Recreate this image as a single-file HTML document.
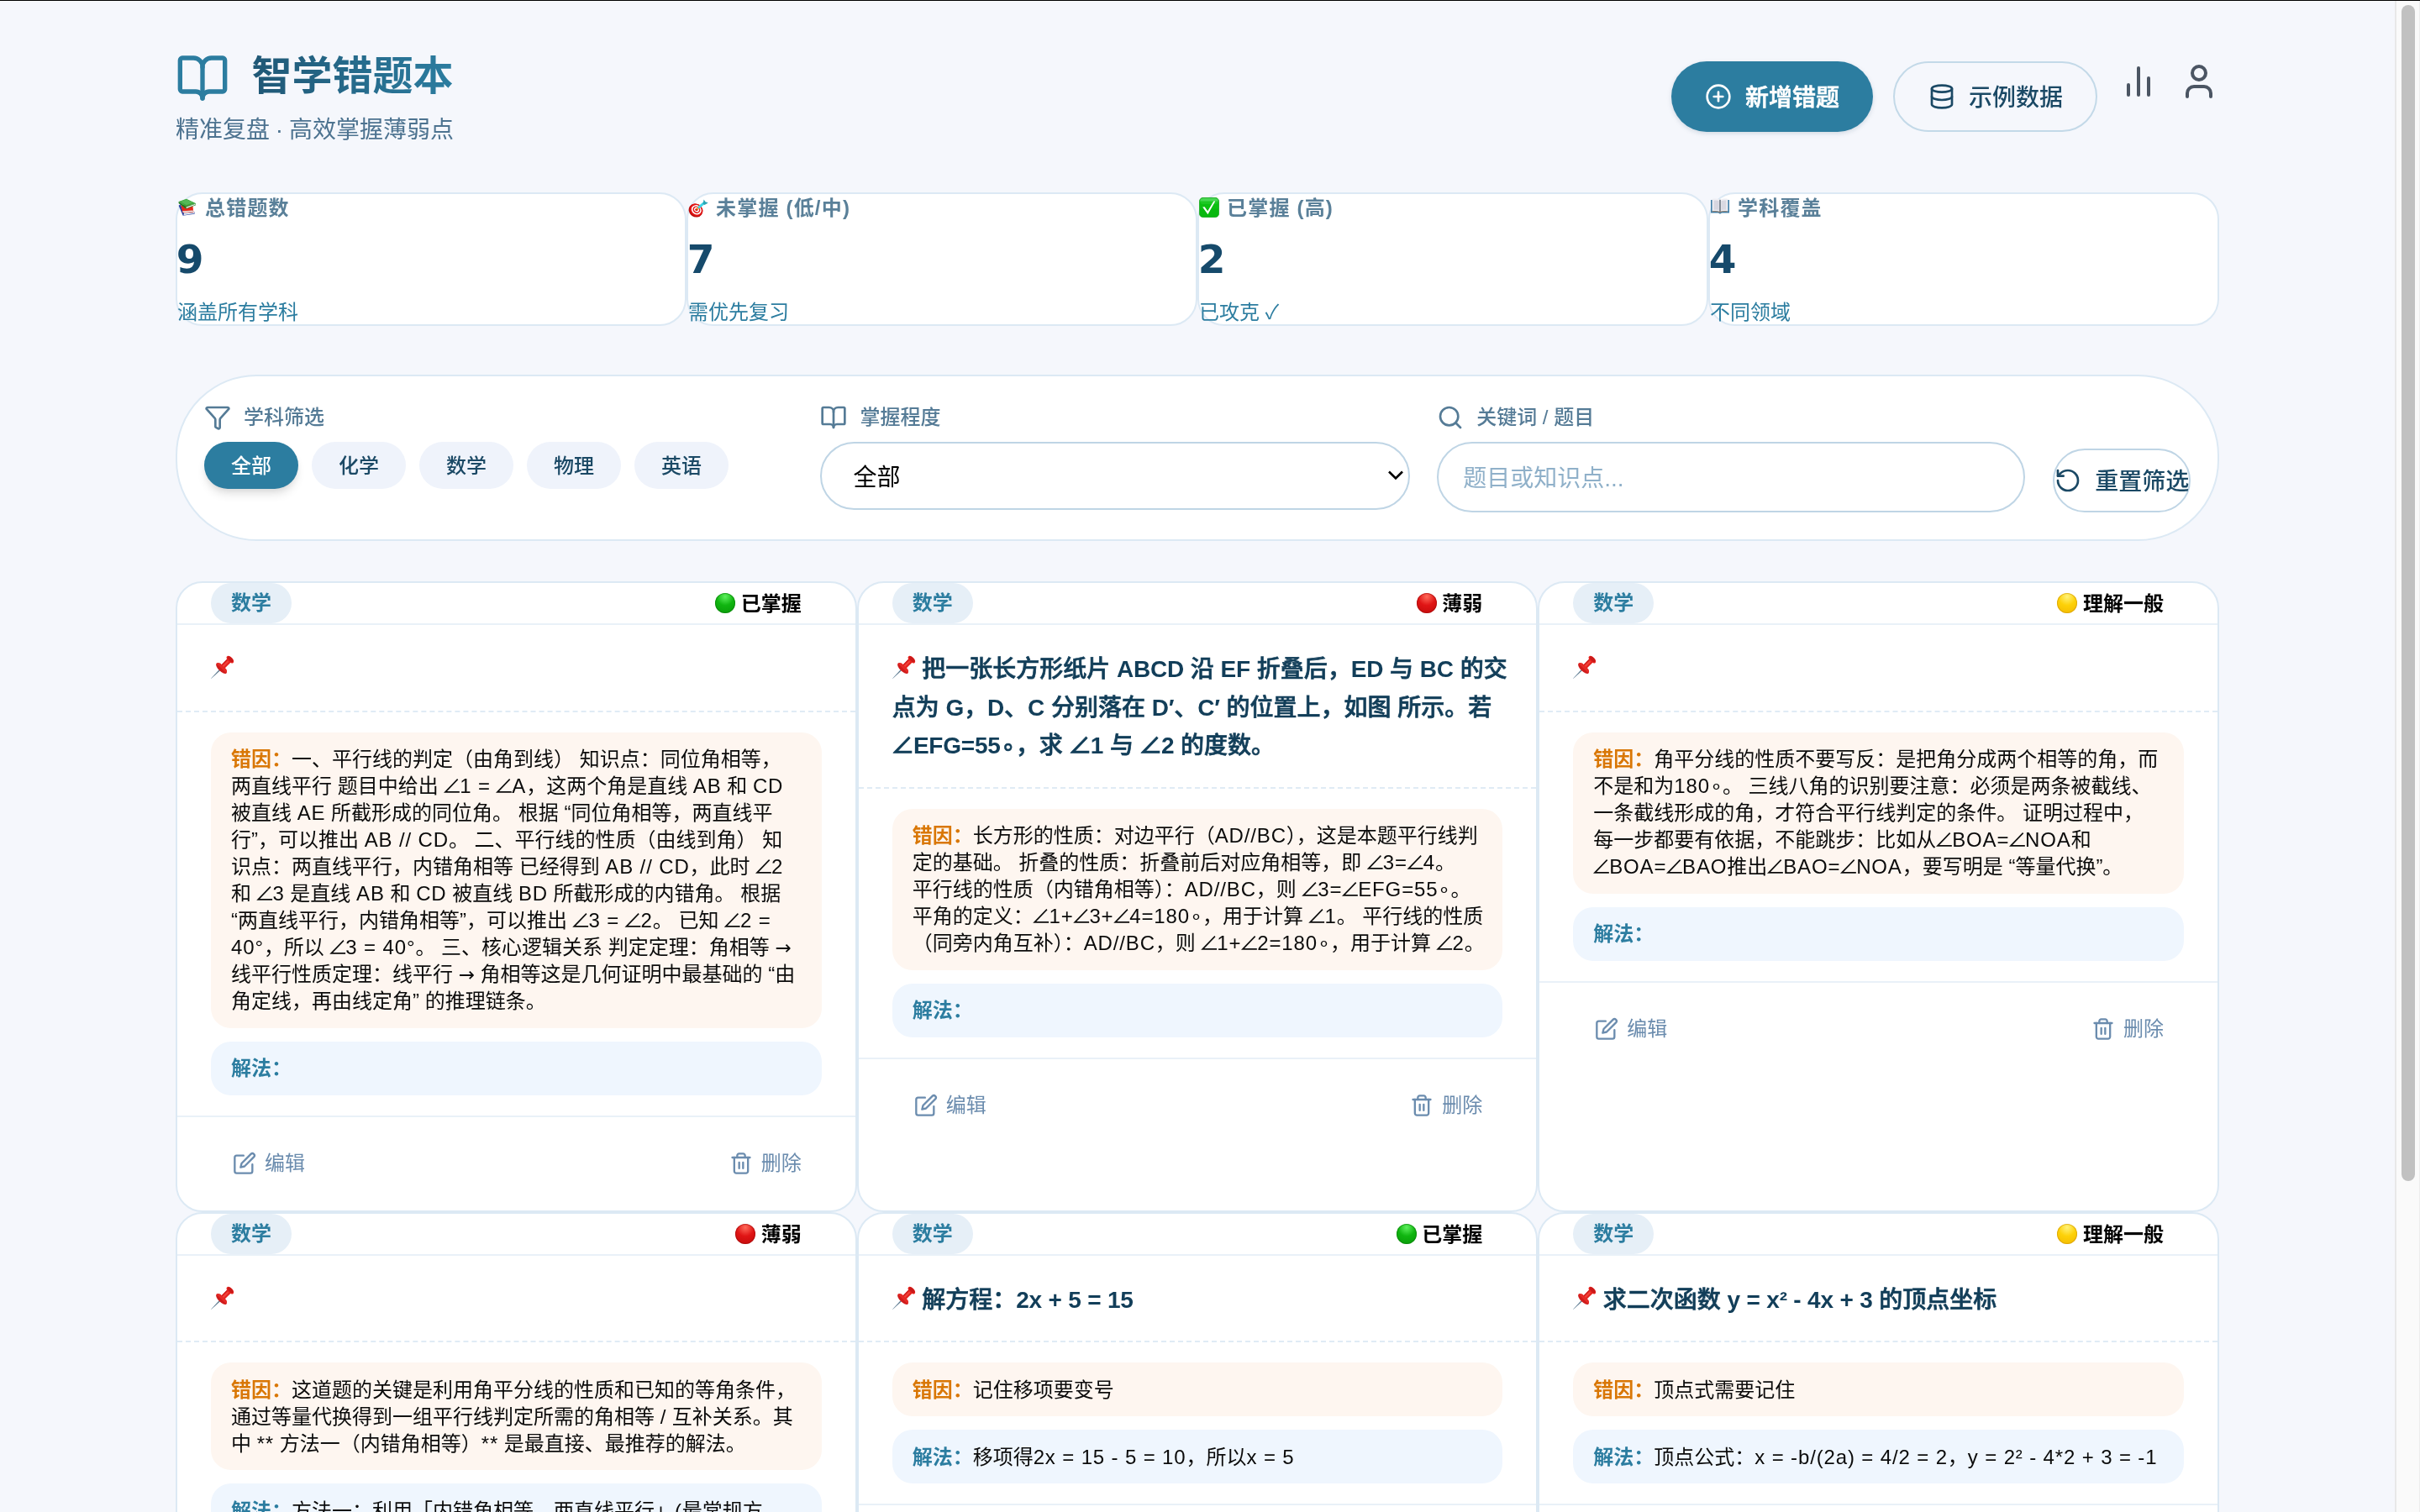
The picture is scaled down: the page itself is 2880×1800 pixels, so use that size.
<!DOCTYPE html>
<html lang="zh-CN">
<head>
<meta charset="utf-8">
<title>智学错题本</title>
<style>
*{box-sizing:border-box}
html,body{margin:0;padding:0}
html{background:#f5f7fc}
body{width:2880px;height:1800px;overflow:hidden;position:relative;font-family:"Liberation Sans","Noto Sans CJK SC",sans-serif;color:#111;-webkit-font-smoothing:antialiased}
#z{will-change:transform;zoom:2;position:absolute;left:0;top:0;width:1440px;height:900px;overflow:hidden;background:#f5f7fc}
@media (max-width:2000px){body{width:1440px;height:900px}#z{zoom:1}}
.topline{position:absolute;left:0;top:0;width:1440px;height:.5px;background:#000;z-index:9}
.sb{position:absolute;left:1425px;top:.5px;width:15px;height:899.5px;background:#fafafa;border-left:1px solid #e8e8e8;border-right:.5px solid #ededed}
.sb i{position:absolute;left:3px;top:2.5px;width:8px;height:700px;border-radius:4px;background:#c1c1c1}
.wrap{position:absolute;left:104.5px;top:0;width:1216px;height:900px}
svg{display:block}
.ic{fill:none;stroke:currentColor;stroke-width:2;stroke-linecap:round;stroke-linejoin:round}

/* header */
.logo{position:absolute;left:-.25px;top:30.3px;width:32px;height:32px;color:#2c7da0}
.ttl{position:absolute;left:-1.25px;top:29.5px;margin:0;padding-left:46.5px;width:166.5px;font-size:24px;line-height:32px;font-weight:700;white-space:nowrap;background:linear-gradient(90deg,#1b4965,#2c7da0);-webkit-background-clip:text;background-clip:text;color:transparent}
.sub{position:absolute;left:0;top:67.35px;word-spacing:-.5px;margin:0;font-size:14px;line-height:20px;color:#4d7390;white-space:nowrap}
.btn{position:absolute;top:36.45px;height:42px;border-radius:21px;display:flex;align-items:center;font-size:14px;line-height:20px;white-space:nowrap}
.btn span{position:relative;top:1px}
.btn svg{width:16px;height:16px;margin-right:8px;flex:none}
.b1{left:890px;width:120.2px;padding-left:20px;background:#2c7da0;color:#fff;font-weight:500;-webkit-text-stroke:.3px #fff;box-shadow:0 1px 3px rgba(27,73,101,.1),0 1px 2px rgba(27,73,101,.06)}
.b2{left:1022px;width:121.7px;padding-left:20px;border:1px solid #c3d9e8;color:#1b4965;font-weight:500}
.hi{position:absolute;top:36.45px;width:24px;height:24px;color:#4b5563}

/* stats */
.stat{position:absolute;top:114.5px;width:304px;height:79.5px;border:1px solid #dce9f4;border-radius:16px;background:#fff}
.stat .l{position:absolute;left:0;top:.25px;font-size:12px;line-height:16px;font-weight:700;letter-spacing:.6px;color:#5a8099;white-space:nowrap;display:flex;align-items:center}
.stat .l .e{width:12px;height:12px;margin-right:4.5px;flex:none;position:relative;top:-.5px}
.stat .n{position:absolute;left:-.6px;top:22.9px;font-family:"DejaVu Sans","Liberation Sans",sans-serif;font-size:23.5px;line-height:32px;font-weight:700;color:#164a6b;white-space:nowrap}
.stat .s{position:absolute;left:0;top:62.5px;font-size:12px;line-height:16px;color:#2c7da0;white-space:nowrap}

/* filter */
.flt{position:absolute;left:0;top:222.9px;width:1216px;height:99.1px;border:1px solid #dce9f4;border-radius:48px;background:#fff}
.fl{position:absolute;top:16.4px;height:16px;display:flex;align-items:center;font-size:12px;line-height:16px;font-weight:500;color:#557b96;white-space:nowrap}
.fl svg{width:16px;height:16px;margin-right:7.5px;flex:none;position:relative;top:.4px}
.chips{position:absolute;left:16px;top:39.1px;display:flex}
.chip{height:28px;width:56px;margin-right:8px;border-radius:14px;background:#eff3fb;color:#1b4965;font-size:12px;line-height:29.2px;text-align:center;font-weight:500;overflow:hidden;white-space:nowrap}
.chip.on{background:#2c7da0;color:#fff;box-shadow:0 4px 6px -1px rgba(0,0,0,.11),0 2px 4px -2px rgba(0,0,0,.1)}
.sel{position:absolute;left:382.7px;top:39.1px;width:350.7px;height:40.4px;border:1px solid #bfd5e5;border-radius:21px;font-size:14px;line-height:41.2px;padding-left:18.5px;overflow:hidden;color:#000;white-space:nowrap}
.sel svg{position:absolute;right:2.6px;top:15.6px;width:10px;height:6.5px}
.inp{position:absolute;left:749.6px;top:39.1px;width:350px;height:42px;border:1px solid #bfd5e5;border-radius:21px;font-size:14px;line-height:42.4px;padding-left:14.5px;overflow:hidden;color:#8fb0c9;white-space:nowrap}
.rst{position:absolute;left:1116.1px;top:43.1px;width:81.8px;height:38px;border:1px solid #bfd5e5;border-radius:19px;display:flex;align-items:center;font-size:14px;line-height:20px;font-weight:500;color:#1b4965;white-space:nowrap}
.rst span{position:relative;top:1px}
.rst svg{width:16px;height:16px;margin-right:8px;flex:none}

/* cards */
.card{position:absolute;width:405.333px;border:1px solid #dce9f4;border-radius:16px;background:#fff;overflow:hidden}
.ch{height:25px;padding:0 20px;display:flex;justify-content:space-between;align-items:flex-start;border-bottom:1px solid #e9f1f8}
.subj{height:24px;line-height:24px;padding:0 12px;border-radius:12px;background:#e6eff7;color:#2c7da0;font-size:12px;font-weight:700;white-space:nowrap}
.st{height:24px;padding:1px 12px 0;font-size:12px;line-height:23px;overflow:hidden;font-weight:700;color:#000;display:flex;align-items:center;white-space:nowrap}
.st i{display:block;width:12px;height:12px;border-radius:50%;margin-right:3.6px;flex:none;position:relative;top:-.5px;left:.3px}
.g{background:radial-gradient(circle at 50% 18%,#5df05d 0,#10b510 45%,#089808 100%);box-shadow:inset 0 0 0 .5px rgba(10,120,10,.55)}
.r{background:radial-gradient(circle at 50% 18%,#ff6a5a 0,#e01515 45%,#c00a0a 100%);box-shadow:inset 0 0 0 .5px rgba(150,10,10,.5)}
.y{background:radial-gradient(circle at 50% 18%,#fff27a 0,#fdd108 45%,#f2b800 100%);box-shadow:inset 0 0 0 .5px rgba(200,140,0,.5)}
.ct{padding:15px 20px 13px;border-bottom:1px dashed #e0ebf5;font-size:14px;line-height:22.75px;font-weight:500;-webkit-text-stroke:.34px #123e59;color:#123e59;white-space:nowrap;min-height:51.75px}
.pin{display:inline-block;width:14px;height:14px;vertical-align:-.6px;margin-right:3.75px;position:relative;top:.25px}
.cb{padding:12px 20px}
.box{border-radius:12px;padding:8.4px 12px 7.6px;font-size:12px;line-height:16px;color:#0b0b0b;white-space:nowrap}
.err{background:#fef6f0}
.sol{background:#eff6fe;margin-top:8px}
.ar{font-family:"DejaVu Sans",sans-serif;font-size:11.5px;line-height:1}
.box .la{letter-spacing:.43px}
.box .an{font-style:normal;margin:0 -1.3px}
.ct .la{letter-spacing:-.1px;font-weight:700;-webkit-text-stroke:0}
.ct .an{font-style:normal;margin:0 -.7px}
.err b{color:#d97706;font-weight:700}
.sol b{color:#2c7da0;font-weight:700}
.cf{border-top:1px solid #e9f1f8;height:56.7px;display:flex;justify-content:space-between;align-items:center;padding:0 20px;color:#6b8cae;font-size:12px;line-height:16px}
.fb{display:flex;align-items:center;padding:0 12px 0 13px;white-space:nowrap}
.fb svg{width:14px;height:14px;margin-right:5px;flex:none}
</style>
</head>
<body>
<div id="z">
<div class="topline"></div>
<div class="wrap">
<div class="logo"><svg class="ic" viewBox="0 0 24 24" ><path d="M12 7v14"/><path d="M3 18a1 1 0 0 1-1-1V4a1 1 0 0 1 1-1h5a4 4 0 0 1 4 4 4 4 0 0 1 4-4h5a1 1 0 0 1 1 1v13a1 1 0 0 1-1 1h-6a3 3 0 0 0-3 3 3 3 0 0 0-3-3z"/></svg></div>
<h1 class="ttl">智学错题本</h1>
<p class="sub">精准复盘 · 高效掌握薄弱点</p>
<div class="btn b1"><svg class="ic" viewBox="0 0 24 24" ><circle cx="12" cy="12" r="10"/><path d="M8 12h8"/><path d="M12 8v8"/></svg><span>新增错题</span></div>
<div class="btn b2"><svg class="ic" viewBox="0 0 24 24" ><ellipse cx="12" cy="5" rx="9" ry="3"/><path d="M3 5v14a9 3 0 0 0 18 0V5"/><path d="M3 12a9 3 0 0 0 18 0"/></svg><span>示例数据</span></div>
<div class="hi" style="left:1156px"><svg class="ic" viewBox="0 0 24 24" ><path d="M18 20V10"/><path d="M12 20V4"/><path d="M6 20v-6"/></svg></div>
<div class="hi" style="left:1192px"><svg class="ic" viewBox="0 0 24 24" ><path d="M19 21v-2a4 4 0 0 0-4-4H9a4 4 0 0 0-4 4v2"/><circle cx="12" cy="7" r="4"/></svg></div>
<div class="stat" style="left:0px"><div class="l"><svg class="e" viewBox="-.74 -1 26 26"><path d="M1 9.5 3.5 8 8 20.5 6.5 22.5z" fill="#2a3f9e"/><path d="M6.5 22.5 8 20.5 22 18 21.5 20.5z" fill="#3047b0"/><path d="M8 20.6 21.6 18.2 21.4 19.6 7.6 21.9z" fill="#f1efe6"/><path d="M4 9 19 8.5 20 17 6 18z" fill="#e8261b"/><path d="M5.8 16.2 19.8 15.4 20.2 18 6.3 18.9z" fill="#c71e16"/><path d="M6 16.6 19.6 15.9 19.8 17.4 6.2 18.1z" fill="#eef3ee"/><path d="M1 4.5 11 1 23 6.5 10.5 11z" fill="#3aa53a"/><path d="M1 4.5 10.5 11 10.5 13.8 1 6.6z" fill="#1e7a1e"/><path d="M10.5 11 23 6.5 23 9 10.5 13.8z" fill="#2a8c2a"/><path d="M10.9 11.5 22.6 7.4 22.6 8.6 10.9 13z" fill="#f4f2f6"/><path d="M3 4.4 11 1.6 20 5.8 11 8.8z" fill="#63c063" opacity=".7"/></svg>总错题数</div><div class="n">9</div><div class="s">涵盖所有学科</div></div><div class="stat" style="left:304px"><div class="l"><svg class="e" viewBox="0 0 24 24"><ellipse cx="9" cy="15.5" rx="8.6" ry="7.8" transform="rotate(35 9 15.5)" fill="#b80d0d"/><ellipse cx="9.6" cy="14.9" rx="8" ry="7.1" transform="rotate(35 9.6 14.9)" fill="#e31414"/><ellipse cx="9.8" cy="14.8" rx="6.2" ry="5.4" transform="rotate(35 9.8 14.8)" fill="#fff"/><ellipse cx="9.9" cy="14.7" rx="4.6" ry="4" transform="rotate(35 9.9 14.7)" fill="#e31414"/><ellipse cx="10" cy="14.6" rx="3.1" ry="2.7" transform="rotate(35 10 14.6)" fill="#fff"/><ellipse cx="10" cy="14.5" rx="1.7" ry="1.5" fill="#d40c0c"/><path d="M10.5 14 13 11" stroke="#e8a21a" stroke-width="1.6" stroke-linecap="round"/><path d="M13 11.6 18.2 7.2" stroke="#3fd6e6" stroke-width="3" stroke-linecap="round"/><path d="M17.5 7.8 18.6 2.6 20.5 5.2 23.8 6.4 19.4 8.9z" fill="#2aa7b5"/></svg>未掌握 (低/中)</div><div class="n">7</div><div class="s">需优先复习</div></div><div class="stat" style="left:608px"><div class="l"><svg class="e" viewBox="0 0 24 24"><rect x=".3" y=".3" width="23.4" height="23.4" rx="4.6" fill="#08b80f" stroke="#0a9a10" stroke-width=".6"/><rect x="1.2" y="1" width="21.600" height="7" rx="3.800" fill="#7cf088" opacity=".55"/><rect x=".9" y="4.500" width="22.200" height="9" fill="#0cc313" opacity=".75"/><path d="M4.2 11.6 6.6 11.2 10.2 16.3 17.4 4.6 19.3 4.6 10.4 20.2z" fill="#fff"/></svg>已掌握 (高)</div><div class="n">2</div><div class="s">已攻克 ✓</div></div><div class="stat" style="left:912px"><div class="l"><svg class="e" viewBox="0 1.5 24 24"><path d="M1 4.5h22v15.5h-9l-2 1.2-2-1.2H1z" fill="#3f7fa8"/><path d="M2.6 3.4c3.2-.6 6.6-.4 9 .9v14.2c-2.6-1-5.8-1.1-9-.4z" fill="#eeeef3"/><path d="M21.4 3.4c-3.2-.6-6.6-.4-9 .9v14.2c2.6-1 5.8-1.1 9-.4z" fill="#eeeef3"/><path d="M4.6 5.2c2-.3 4.2-.2 6 .5v11c-1.9-.6-4-.6-6-.3z" fill="#d6d6e0"/><path d="M19.4 5.2c-2-.3-4.2-.2-6 .5v11c1.900-.6 4-.6 6-.3z" fill="#d9d9e2"/><path d="M11.3 4.2h1.4v14.6h-1.4z" fill="#77777f"/><path d="M2.6 18.1c3.200-.7 6.400-.6 9 .4 2.600-1 5.800-1.100 9-.4v.8c-3.200-.6-6.400-.5-9 .6-2.600-1.100-5.800-1.200-9-.6z" fill="#a0785a"/></svg>学科覆盖</div><div class="n">4</div><div class="s">不同领域</div></div>
<div class="flt">
<div class="fl" style="left:16px"><svg class="ic" viewBox="0 0 24 24" ><path d="M10 20a1 1 0 0 0 .553.895l2 1A1 1 0 0 0 14 21v-7a2 2 0 0 1 .517-1.341L21.74 4.67A1 1 0 0 0 21 3H3a1 1 0 0 0-.742 1.67l7.225 7.989A2 2 0 0 1 10 14z"/></svg>学科筛选</div>
<div class="chips"><div class="chip on">全部</div><div class="chip">化学</div><div class="chip">数学</div><div class="chip">物理</div><div class="chip">英语</div></div>
<div class="fl" style="left:382.7px"><svg class="ic" viewBox="0 0 24 24" ><path d="M12 7v14"/><path d="M3 18a1 1 0 0 1-1-1V4a1 1 0 0 1 1-1h5a4 4 0 0 1 4 4 4 4 0 0 1 4-4h5a1 1 0 0 1 1 1v13a1 1 0 0 1-1 1h-6a3 3 0 0 0-3 3 3 3 0 0 0-3-3z"/></svg>掌握程度</div>
<div class="sel">全部<svg viewBox="0 0 20 13" fill="none" stroke="#000" stroke-width="2.6" stroke-linecap="butt" stroke-linejoin="miter"><path d="M2 2.5l8 8 8-8"/></svg></div>
<div class="fl" style="left:749.6px"><svg class="ic" viewBox="0 0 24 24" ><circle cx="11" cy="11" r="8"/><path d="m21 21-4.3-4.3"/></svg>关键词 / 题目</div>
<div class="inp">题目或知识点...</div>
<div class="rst"><svg class="ic" viewBox="0 0 24 24" ><path d="M3 12a9 9 0 1 0 9-9 9.75 9.75 0 0 0-6.74 2.74L3 8"/><path d="M3 3v5h5"/></svg><span>重置筛选</span></div>
</div>
<div class="card" style="left:0px;top:346.05px;height:375.4px;"><div class="ch"><span class="subj">数学</span><span class="st"><i class="g"></i>已掌握</span></div><div class="ct"><svg class="pin" viewBox="0 0 28 28"><g transform="translate(12.6 15.4) rotate(45)"><path d="M-.8 3 .8 3 .15 17.6-.15 17.6z" fill="#6d8fa8"/><path d="M-.2 3 .8 3 .15 17.6z" fill="#4a5560" opacity=".6"/><ellipse cx="0" cy=".2" rx="8.3" ry="3.5" fill="#d01c1c"/><path d="M-2.9-13.5h5.800v12.500h-5.800z" fill="#e3231f"/><path d="M-1.300-13.5h2.200v12.500h-2.200z" fill="#f2423b"/><path d="M-2.900-13.5h1v12.500h-1z" fill="#c91c1c"/><path d="M-8.300 .2c0-2.200 3-4 5.400-3.200h5.800c2.400-.800 5.400 1 5.400 3.200z" fill="#e62a26"/><ellipse cx="0" cy="-14.500" rx="5.300" ry="2.900" fill="#e8241f"/><ellipse cx="0" cy="-15" rx="4.200" ry="2" fill="#c91a1a"/></g></svg></div><div class="cb"><div class="box err"><b>错因：</b>一、平行线的判定（由角到线） 知识点：同位角相等，<br>两直线平行 题目中给出 <i class="an">∠</i><span class="la">1 =</span> <i class="an">∠</i><span class="la">A</span>，这两个角是直线 <span class="la">AB</span> 和 <span class="la">CD</span><br>被直线 <span class="la">AE</span> 所截形成的同位角。 根据 “同位角相等，两直线平<br>行”，可以推出 <span class="la">AB // CD</span>。 二、平行线的性质（由线到角） 知<br>识点：两直线平行，内错角相等 已经得到 <span class="la">AB // CD</span>，此时 <i class="an">∠</i><span class="la">2</span><br>和 <i class="an">∠</i><span class="la">3</span> 是直线 <span class="la">AB</span> 和 <span class="la">CD</span> 被直线 <span class="la">BD</span> 所截形成的内错角。 根据<br>“两直线平行，内错角相等”，可以推出 <i class="an">∠</i><span class="la">3 =</span> <i class="an">∠</i><span class="la">2</span>。 已知 <i class="an">∠</i><span class="la">2 =</span><br><span class="la">40°</span>，所以 <i class="an">∠</i><span class="la">3 = 40°</span>。 三、核心逻辑关系 判定定理：角相等 <span class="ar">→</span><br>线平行性质定理：线平行 <span class="ar">→</span> 角相等这是几何证明中最基础的 “由<br>角定线，再由线定角” 的推理链条。</div><div class="box sol"><b>解法：</b></div></div><div class="cf"><div class="fb"><svg class="ic" viewBox="0 0 24 24" ><path d="M11 4H4a2 2 0 0 0-2 2v14a2 2 0 0 0 2 2h14a2 2 0 0 0 2-2v-7"/><path d="M18.5 2.5a2.121 2.121 0 0 1 3 3L12 15l-4 1 1-4 9.5-9.5z"/></svg>编辑</div><div class="fb"><svg class="ic" viewBox="0 0 24 24" ><path d="M3 6h18"/><path d="M19 6v14c0 1-1 2-2 2H7c-1 0-2-1-2-2V6"/><path d="M8 6V4c0-1 1-2 2-2h4c1 0 2 1 2 2v2"/><line x1="10" x2="10" y1="11" y2="17"/><line x1="14" x2="14" y1="11" y2="17"/></svg>删除</div></div></div><div class="card" style="left:405.333px;top:346.05px;height:375.4px;"><div class="ch"><span class="subj">数学</span><span class="st"><i class="r"></i>薄弱</span></div><div class="ct"><svg class="pin" viewBox="0 0 28 28"><g transform="translate(12.6 15.4) rotate(45)"><path d="M-.8 3 .8 3 .15 17.6-.15 17.6z" fill="#6d8fa8"/><path d="M-.2 3 .8 3 .15 17.6z" fill="#4a5560" opacity=".6"/><ellipse cx="0" cy=".2" rx="8.3" ry="3.5" fill="#d01c1c"/><path d="M-2.9-13.5h5.800v12.500h-5.800z" fill="#e3231f"/><path d="M-1.300-13.5h2.200v12.500h-2.200z" fill="#f2423b"/><path d="M-2.900-13.5h1v12.500h-1z" fill="#c91c1c"/><path d="M-8.300 .2c0-2.200 3-4 5.400-3.200h5.800c2.400-.800 5.400 1 5.400 3.200z" fill="#e62a26"/><ellipse cx="0" cy="-14.500" rx="5.300" ry="2.900" fill="#e8241f"/><ellipse cx="0" cy="-15" rx="4.200" ry="2" fill="#c91a1a"/></g></svg>把一张长方形纸片 <span class="la">ABCD</span> 沿 <span class="la">EF</span> 折叠后，<span class="la">ED</span> 与 <span class="la">BC</span> 的交<br>点为 <span class="la">G</span>，<span class="la">D</span>、<span class="la">C</span> 分别落在 <span class="la">D′</span>、<span class="la">C′</span> 的位置上，如图 所示。若<br><i class="an">∠</i><span class="la">EFG=55</span>∘，求 <i class="an">∠</i><span class="la">1</span> 与 <i class="an">∠</i><span class="la">2</span> 的度数。</div><div class="cb"><div class="box err"><b>错因：</b>长方形的性质：对边平行（<span class="la">AD//BC</span>），这是本题平行线判<br>定的基础。 折叠的性质：折叠前后对应角相等，即 <i class="an">∠</i><span class="la">3=</span><i class="an">∠</i><span class="la">4</span>。<br>平行线的性质（内错角相等）：<span class="la">AD//BC</span>，则 <i class="an">∠</i><span class="la">3=</span><i class="an">∠</i><span class="la">EFG=55</span>∘。<br>平角的定义：<i class="an">∠</i><span class="la">1+</span><i class="an">∠</i><span class="la">3+</span><i class="an">∠</i><span class="la">4=180</span>∘，用于计算 <i class="an">∠</i><span class="la">1</span>。 平行线的性质<br>（同旁内角互补）：<span class="la">AD//BC</span>，则 <i class="an">∠</i><span class="la">1+</span><i class="an">∠</i><span class="la">2=180</span>∘，用于计算 <i class="an">∠</i><span class="la">2</span>。</div><div class="box sol"><b>解法：</b></div></div><div class="cf"><div class="fb"><svg class="ic" viewBox="0 0 24 24" ><path d="M11 4H4a2 2 0 0 0-2 2v14a2 2 0 0 0 2 2h14a2 2 0 0 0 2-2v-7"/><path d="M18.5 2.5a2.121 2.121 0 0 1 3 3L12 15l-4 1 1-4 9.5-9.5z"/></svg>编辑</div><div class="fb"><svg class="ic" viewBox="0 0 24 24" ><path d="M3 6h18"/><path d="M19 6v14c0 1-1 2-2 2H7c-1 0-2-1-2-2V6"/><path d="M8 6V4c0-1 1-2 2-2h4c1 0 2 1 2 2v2"/><line x1="10" x2="10" y1="11" y2="17"/><line x1="14" x2="14" y1="11" y2="17"/></svg>删除</div></div></div><div class="card" style="left:810.666px;top:346.05px;height:375.4px;"><div class="ch"><span class="subj">数学</span><span class="st"><i class="y"></i>理解一般</span></div><div class="ct"><svg class="pin" viewBox="0 0 28 28"><g transform="translate(12.6 15.4) rotate(45)"><path d="M-.8 3 .8 3 .15 17.6-.15 17.6z" fill="#6d8fa8"/><path d="M-.2 3 .8 3 .15 17.6z" fill="#4a5560" opacity=".6"/><ellipse cx="0" cy=".2" rx="8.3" ry="3.5" fill="#d01c1c"/><path d="M-2.9-13.5h5.800v12.500h-5.800z" fill="#e3231f"/><path d="M-1.300-13.5h2.200v12.500h-2.200z" fill="#f2423b"/><path d="M-2.900-13.5h1v12.500h-1z" fill="#c91c1c"/><path d="M-8.300 .2c0-2.200 3-4 5.400-3.200h5.800c2.400-.800 5.400 1 5.400 3.200z" fill="#e62a26"/><ellipse cx="0" cy="-14.500" rx="5.300" ry="2.900" fill="#e8241f"/><ellipse cx="0" cy="-15" rx="4.200" ry="2" fill="#c91a1a"/></g></svg></div><div class="cb"><div class="box err"><b>错因：</b>角平分线的性质不要写反：是把角分成两个相等的角，而<br>不是和为<span class="la">180</span>∘。 三线八角的识别要注意：必须是两条被截线、<br>一条截线形成的角，才符合平行线判定的条件。 证明过程中，<br>每一步都要有依据，不能跳步：比如从<i class="an">∠</i><span class="la">BOA=</span><i class="an">∠</i><span class="la">NOA</span>和<br><i class="an">∠</i><span class="la">BOA=</span><i class="an">∠</i><span class="la">BAO</span>推出<i class="an">∠</i><span class="la">BAO=</span><i class="an">∠</i><span class="la">NOA</span>，要写明是 “等量代换”。</div><div class="box sol"><b>解法：</b></div></div><div class="cf"><div class="fb"><svg class="ic" viewBox="0 0 24 24" ><path d="M11 4H4a2 2 0 0 0-2 2v14a2 2 0 0 0 2 2h14a2 2 0 0 0 2-2v-7"/><path d="M18.5 2.5a2.121 2.121 0 0 1 3 3L12 15l-4 1 1-4 9.5-9.5z"/></svg>编辑</div><div class="fb"><svg class="ic" viewBox="0 0 24 24" ><path d="M3 6h18"/><path d="M19 6v14c0 1-1 2-2 2H7c-1 0-2-1-2-2V6"/><path d="M8 6V4c0-1 1-2 2-2h4c1 0 2 1 2 2v2"/><line x1="10" x2="10" y1="11" y2="17"/><line x1="14" x2="14" y1="11" y2="17"/></svg>删除</div></div></div><div class="card" style="left:0px;top:721.45px;height:400px;"><div class="ch"><span class="subj">数学</span><span class="st"><i class="r"></i>薄弱</span></div><div class="ct"><svg class="pin" viewBox="0 0 28 28"><g transform="translate(12.6 15.4) rotate(45)"><path d="M-.8 3 .8 3 .15 17.6-.15 17.6z" fill="#6d8fa8"/><path d="M-.2 3 .8 3 .15 17.6z" fill="#4a5560" opacity=".6"/><ellipse cx="0" cy=".2" rx="8.3" ry="3.5" fill="#d01c1c"/><path d="M-2.9-13.5h5.800v12.500h-5.800z" fill="#e3231f"/><path d="M-1.300-13.5h2.200v12.500h-2.200z" fill="#f2423b"/><path d="M-2.900-13.5h1v12.500h-1z" fill="#c91c1c"/><path d="M-8.300 .2c0-2.200 3-4 5.400-3.200h5.800c2.400-.800 5.400 1 5.400 3.200z" fill="#e62a26"/><ellipse cx="0" cy="-14.500" rx="5.300" ry="2.900" fill="#e8241f"/><ellipse cx="0" cy="-15" rx="4.200" ry="2" fill="#c91a1a"/></g></svg></div><div class="cb"><div class="box err"><b>错因：</b>这道题的关键是利用角平分线的性质和已知的等角条件，<br>通过等量代换得到一组平行线判定所需的角相等 <span class="la">/</span> 互补关系。其<br>中 <span class="la">**</span> 方法一（内错角相等）<span class="la">**</span> 是最直接、最推荐的解法。</div><div class="box sol"><b>解法：</b>方法一：利用「内错角相等，两直线平行」<span class="la">(</span>最常规方<br>法<span class="la">)</span></div></div><div class="cf"><div class="fb"><svg class="ic" viewBox="0 0 24 24" ><path d="M11 4H4a2 2 0 0 0-2 2v14a2 2 0 0 0 2 2h14a2 2 0 0 0 2-2v-7"/><path d="M18.5 2.5a2.121 2.121 0 0 1 3 3L12 15l-4 1 1-4 9.5-9.5z"/></svg>编辑</div><div class="fb"><svg class="ic" viewBox="0 0 24 24" ><path d="M3 6h18"/><path d="M19 6v14c0 1-1 2-2 2H7c-1 0-2-1-2-2V6"/><path d="M8 6V4c0-1 1-2 2-2h4c1 0 2 1 2 2v2"/><line x1="10" x2="10" y1="11" y2="17"/><line x1="14" x2="14" y1="11" y2="17"/></svg>删除</div></div></div><div class="card" style="left:405.333px;top:721.45px;height:400px;"><div class="ch"><span class="subj">数学</span><span class="st"><i class="g"></i>已掌握</span></div><div class="ct"><svg class="pin" viewBox="0 0 28 28"><g transform="translate(12.6 15.4) rotate(45)"><path d="M-.8 3 .8 3 .15 17.6-.15 17.6z" fill="#6d8fa8"/><path d="M-.2 3 .8 3 .15 17.6z" fill="#4a5560" opacity=".6"/><ellipse cx="0" cy=".2" rx="8.3" ry="3.5" fill="#d01c1c"/><path d="M-2.9-13.5h5.800v12.500h-5.800z" fill="#e3231f"/><path d="M-1.300-13.5h2.200v12.500h-2.200z" fill="#f2423b"/><path d="M-2.900-13.5h1v12.500h-1z" fill="#c91c1c"/><path d="M-8.300 .2c0-2.200 3-4 5.400-3.200h5.800c2.400-.800 5.400 1 5.400 3.200z" fill="#e62a26"/><ellipse cx="0" cy="-14.500" rx="5.300" ry="2.900" fill="#e8241f"/><ellipse cx="0" cy="-15" rx="4.200" ry="2" fill="#c91a1a"/></g></svg>解方程：<span class="la">2x + 5 = 15</span></div><div class="cb"><div class="box err"><b>错因：</b>记住移项要变号</div><div class="box sol"><b>解法：</b>移项得<span class="la">2x = 15 - 5 = 10</span>，所以<span class="la">x = 5</span></div></div><div class="cf"><div class="fb"><svg class="ic" viewBox="0 0 24 24" ><path d="M11 4H4a2 2 0 0 0-2 2v14a2 2 0 0 0 2 2h14a2 2 0 0 0 2-2v-7"/><path d="M18.5 2.5a2.121 2.121 0 0 1 3 3L12 15l-4 1 1-4 9.5-9.5z"/></svg>编辑</div><div class="fb"><svg class="ic" viewBox="0 0 24 24" ><path d="M3 6h18"/><path d="M19 6v14c0 1-1 2-2 2H7c-1 0-2-1-2-2V6"/><path d="M8 6V4c0-1 1-2 2-2h4c1 0 2 1 2 2v2"/><line x1="10" x2="10" y1="11" y2="17"/><line x1="14" x2="14" y1="11" y2="17"/></svg>删除</div></div></div><div class="card" style="left:810.666px;top:721.45px;height:400px;"><div class="ch"><span class="subj">数学</span><span class="st"><i class="y"></i>理解一般</span></div><div class="ct"><svg class="pin" viewBox="0 0 28 28"><g transform="translate(12.6 15.4) rotate(45)"><path d="M-.8 3 .8 3 .15 17.6-.15 17.6z" fill="#6d8fa8"/><path d="M-.2 3 .8 3 .15 17.6z" fill="#4a5560" opacity=".6"/><ellipse cx="0" cy=".2" rx="8.3" ry="3.5" fill="#d01c1c"/><path d="M-2.9-13.5h5.800v12.500h-5.800z" fill="#e3231f"/><path d="M-1.300-13.5h2.200v12.500h-2.200z" fill="#f2423b"/><path d="M-2.900-13.5h1v12.500h-1z" fill="#c91c1c"/><path d="M-8.300 .2c0-2.200 3-4 5.400-3.200h5.800c2.400-.800 5.400 1 5.400 3.200z" fill="#e62a26"/><ellipse cx="0" cy="-14.500" rx="5.300" ry="2.900" fill="#e8241f"/><ellipse cx="0" cy="-15" rx="4.200" ry="2" fill="#c91a1a"/></g></svg>求二次函数 <span class="la">y = x² - 4x + 3</span> 的顶点坐标</div><div class="cb"><div class="box err"><b>错因：</b>顶点式需要记住</div><div class="box sol"><b>解法：</b>顶点公式：<span class="la">x = -b/(2a) = 4/2 = 2</span>，<span class="la">y = 2² - 4*2 + 3 = -1</span></div></div><div class="cf"><div class="fb"><svg class="ic" viewBox="0 0 24 24" ><path d="M11 4H4a2 2 0 0 0-2 2v14a2 2 0 0 0 2 2h14a2 2 0 0 0 2-2v-7"/><path d="M18.5 2.5a2.121 2.121 0 0 1 3 3L12 15l-4 1 1-4 9.5-9.5z"/></svg>编辑</div><div class="fb"><svg class="ic" viewBox="0 0 24 24" ><path d="M3 6h18"/><path d="M19 6v14c0 1-1 2-2 2H7c-1 0-2-1-2-2V6"/><path d="M8 6V4c0-1 1-2 2-2h4c1 0 2 1 2 2v2"/><line x1="10" x2="10" y1="11" y2="17"/><line x1="14" x2="14" y1="11" y2="17"/></svg>删除</div></div></div>
</div>
<div class="sb"><i></i></div>
</div>
<script>(function(){var w=window.innerWidth||2880;if(Math.abs(w-2880)>2){var s=w/1440;var z=document.getElementById('z');z.style.zoom=s;document.body.style.width=(1440*s)+'px';document.body.style.height=(900*s)+'px';}})();</script>
</body>
</html>
